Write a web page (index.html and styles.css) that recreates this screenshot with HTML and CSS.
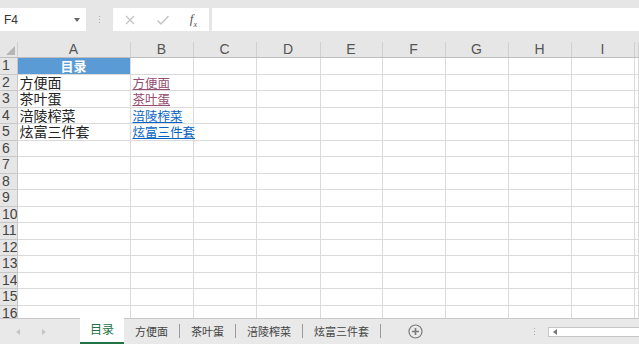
FILE: index.html
```html
<!DOCTYPE html>
<html>
<head>
	<title>目录</title>
	<meta charset="utf-8" />
	<link rel="stylesheet" href="styles.css">
</head>
<body>
	<div class="app">
		<div class="formula-bar">
			<div class="namebox">
				<span class="name">F4</span>
				<span class="caret"></span>
			</div>
			<div class="grip"><i></i><i></i><i></i></div>
			<div class="fx-buttons">
				<svg width="12" height="12" viewBox="0 0 12 12"><path d="M2 2 L10 10 M10 2 L2 10" stroke="#c4c4c4" stroke-width="1.3" fill="none"/></svg>
				<svg width="14" height="12" viewBox="0 0 14 12"><path d="M1.5 6.5 L5 10 L12.5 2" stroke="#c4c4c4" stroke-width="1.5" fill="none"/></svg>
				<span class="fx">f<sub>x</sub></span>
			</div>
			<div class="formula-input"></div>
		</div>

		<div class="sheet">
			<table class="grid">
				<colgroup>
					<col class="c-row"><col class="c-a"><col class="c"><col class="c"><col class="c-d"><col class="c-e"><col class="c"><col class="c"><col class="c"><col class="c"><col>
				</colgroup>
				<tr class="head">
					<th class="corner"><span class="tri"></span></th>
					<th>A</th><th>B</th><th>C</th><th>D</th><th>E</th><th>F</th><th>G</th><th>H</th><th>I</th><th></th>
				</tr>
				<tr><th>1</th><td class="title">目录</td><td></td><td></td><td></td><td></td><td></td><td></td><td></td><td></td><td></td></tr>
				<tr><th>2</th><td class="name-cell">方便面</td><td class="link visited">方便面</td><td></td><td></td><td></td><td></td><td></td><td></td><td></td><td></td></tr>
				<tr><th>3</th><td class="name-cell">茶叶蛋</td><td class="link visited">茶叶蛋</td><td></td><td></td><td></td><td></td><td></td><td></td><td></td><td></td></tr>
				<tr><th>4</th><td class="name-cell">涪陵榨菜</td><td class="link">涪陵榨菜</td><td></td><td></td><td></td><td></td><td></td><td></td><td></td><td></td></tr>
				<tr><th>5</th><td class="name-cell">炫富三件套</td><td class="link">炫富三件套</td><td></td><td></td><td></td><td></td><td></td><td></td><td></td><td></td></tr>
				<tr><th>6</th><td></td><td></td><td></td><td></td><td></td><td></td><td></td><td></td><td></td><td></td></tr>
				<tr><th>7</th><td></td><td></td><td></td><td></td><td></td><td></td><td></td><td></td><td></td><td></td></tr>
				<tr><th>8</th><td></td><td></td><td></td><td></td><td></td><td></td><td></td><td></td><td></td><td></td></tr>
				<tr><th>9</th><td></td><td></td><td></td><td></td><td></td><td></td><td></td><td></td><td></td><td></td></tr>
				<tr><th>10</th><td></td><td></td><td></td><td></td><td></td><td></td><td></td><td></td><td></td><td></td></tr>
				<tr><th>11</th><td></td><td></td><td></td><td></td><td></td><td></td><td></td><td></td><td></td><td></td></tr>
				<tr><th>12</th><td></td><td></td><td></td><td></td><td></td><td></td><td></td><td></td><td></td><td></td></tr>
				<tr><th>13</th><td></td><td></td><td></td><td></td><td></td><td></td><td></td><td></td><td></td><td></td></tr>
				<tr><th>14</th><td></td><td></td><td></td><td></td><td></td><td></td><td></td><td></td><td></td><td></td></tr>
				<tr><th>15</th><td></td><td></td><td></td><td></td><td></td><td></td><td></td><td></td><td></td><td></td></tr>
				<tr><th>16</th><td></td><td></td><td></td><td></td><td></td><td></td><td></td><td></td><td></td><td></td></tr>
			</table>
		</div>

		<div class="tabs">
			<div class="tab-nav">
				<span class="arrow-left"></span>
				<span class="arrow-right"></span>
			</div>
			<div class="tab active">目录</div>
			<div class="tab">方便面</div>
			<div class="tab">茶叶蛋</div>
			<div class="tab">涪陵榨菜</div>
			<div class="tab">炫富三件套</div>
			<div class="add">
				<svg width="15" height="15" viewBox="0 0 15 15"><circle cx="7.5" cy="7.5" r="6.5" stroke="#7a7a7a" stroke-width="1.2" fill="none"/><path d="M7.5 4 V11 M4 7.5 H11" stroke="#7a7a7a" stroke-width="1.6"/></svg>
			</div>
			<div class="tab-grip"><i></i><i></i><i></i></div>
			<div class="hscroll">
				<span class="arrow-small"></span>
			</div>
		</div>
	</div>
</body>
</html>
```

FILE: styles.css
```css
*{
	padding: 0px;
	margin: 0px;
	box-sizing: border-box;
}
body{
	font-family: "Liberation Sans", "Noto Sans CJK SC", sans-serif;
	background: #e6e6e6;
}
.app{
	width: 639px;
	height: 344px;
	display: flex;
	flex-direction: column;
	overflow: hidden;
	background: #e6e6e6;
}
.formula-bar{
	height: 42px;
	padding-top: 8px;
	padding-bottom: 11px;
	display: flex;
	align-items: stretch;
}
.namebox{
	width: 86px;
	background: #fff;
	display: flex;
	align-items: center;
	justify-content: space-between;
	padding: 0 6px 0 4px;
}
.name{
	font-size: 12px;
	color: #333;
}
.caret{
	width: 0;
	height: 0;
	border-left: 3.5px solid transparent;
	border-right: 3.5px solid transparent;
	border-top: 4px solid #666;
}
.grip{
	width: 27px;
	display: flex;
	flex-direction: column;
	align-items: center;
	justify-content: center;
	gap: 2px;
}
.grip i, .tab-grip i{
	display: block;
	width: 1px;
	height: 1px;
	background: #aaa;
}
.fx-buttons{
	width: 96px;
	background: #fff;
	display: flex;
	align-items: center;
	justify-content: space-between;
	padding: 0 12px 0 11px;
}
.fx{
	font-family: "Liberation Serif", serif;
	font-style: italic;
	font-size: 13px;
	color: #555;
}
.fx sub{
	font-size: 8px;
}
.formula-input{
	flex: 1;
	margin-left: 3px;
	background: #fff;
}
.sheet{
	height: 276px;
	overflow: hidden;
	background: #fff;
}
.grid{
	width: 639px;
	table-layout: fixed;
	border-collapse: collapse;
}
.c-row{ width: 17px; }
.c-a{ width: 113px; }
.c{ width: 63px; }
.c-d{ width: 64px; }
.c-e{ width: 62px; }
.grid td, .grid th{
	height: 16.5px;
	border-right: 1px solid #dadada;
	border-bottom: 1px solid #dadada;
	white-space: nowrap;
	padding: 0 2px;
	line-height: 15px;
}
.grid th{
	background: #e6e6e6;
	font-weight: normal;
	color: #444;
	font-size: 14px;
	text-align: left;
	padding-left: 2px;
	border-color: #c8c8c8;
	overflow: hidden;
}
.grid .head th{
	height: 15px;
	text-align: center;
	font-size: 14px;
	color: #555;
	border-right: 1px solid #d0d0d0;
	border-bottom: 1px solid #bdbdbd;
}
.grid .head th.corner{
	position: relative;
}
.tri{
	position: absolute;
	right: 2px;
	bottom: 2px;
	width: 0;
	height: 0;
	border-left: 9px solid transparent;
	border-bottom: 9px solid #b5b5b5;
}
.title{
	background: #5b9bd5;
	color: #fff;
	font-weight: bold;
	text-align: center;
	font-size: 13px;
	font-family: "Noto Sans CJK SC", sans-serif;
}
.name-cell{
	font-size: 14px;
	color: #222;
	font-family: "Noto Sans CJK SC", sans-serif;
}
.link{
	font-size: 12.5px;
	color: #0563c1;
	text-decoration: underline;
	font-family: "Noto Sans CJK SC", sans-serif;
}
.link.visited{
	color: #954f72;
}
.tabs{
	height: 26px;
	border-top: 1px solid #c6c6c6;
	display: flex;
	align-items: stretch;
	background: #e9e9e9;
	font-family: "Noto Sans CJK SC", sans-serif;
	font-size: 11px;
	color: #444;
}
.tab-nav{
	width: 80px;
	display: flex;
	align-items: center;
	padding-left: 16px;
	gap: 22px;
}
.arrow-left{
	width: 0;
	height: 0;
	border-top: 3px solid transparent;
	border-bottom: 3px solid transparent;
	border-right: 4px solid #c4c4c4;
}
.arrow-right{
	width: 0;
	height: 0;
	border-top: 3px solid transparent;
	border-bottom: 3px solid transparent;
	border-left: 4px solid #c4c4c4;
}
.tab{
	padding: 0 11px;
	display: flex;
	align-items: center;
	margin-top: 5px;
	margin-bottom: 6px;
	border-right: 1px solid #9a9a9a;
}
.tab.active{
	width: 44px;
	justify-content: center;
	margin: -1px 0 0;
	padding: 0 0 3px;
	font-size: 12px;
	background: #fff;
	color: #217346;
	border-right: none;
	border-bottom: 2px solid #217346;
}
.add{
	width: 68px;
	display: flex;
	align-items: center;
	justify-content: center;
}
.tab-grip{
	width: 20px;
	margin-left: 75px;
	display: flex;
	flex-direction: column;
	align-items: center;
	justify-content: center;
	gap: 2px;
}
.hscroll{
	flex: 1;
	margin: 8px 0 7px 4px;
	background: #fff;
	border: 1px solid #c6c6c6;
	border-right: none;
	display: flex;
	align-items: center;
	padding-left: 4px;
}
.arrow-small{
	width: 0;
	height: 0;
	border-top: 3px solid transparent;
	border-bottom: 3px solid transparent;
	border-right: 4px solid #777;
}
```
